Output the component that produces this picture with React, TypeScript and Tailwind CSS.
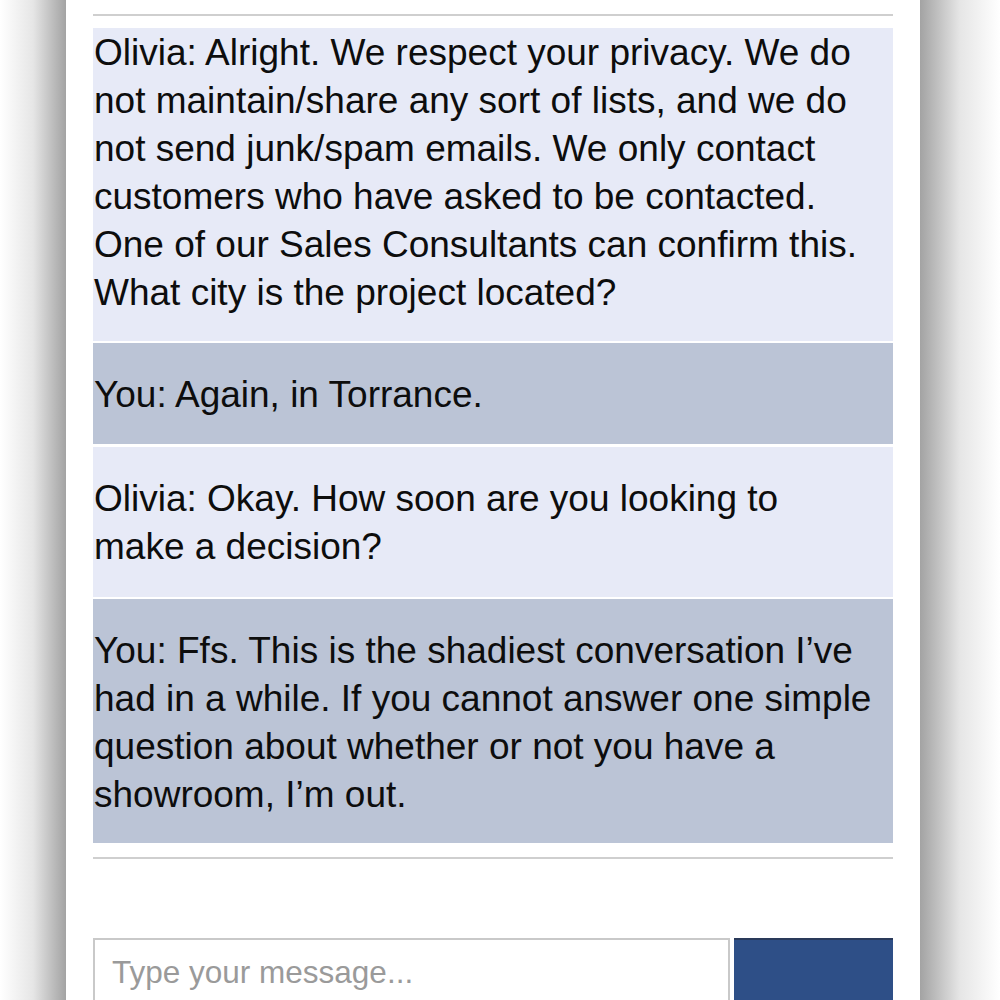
import React from "react";

const messages: { who: "olivia" | "you"; lines: string[]; cls: string }[] = [
  {
    who: "olivia",
    cls: "pt-[1px] pb-[24px]",
    lines: [
      "Olivia: Alright. We respect your privacy. We do",
      "not maintain/share any sort of lists, and we do",
      "not send junk/spam emails. We only contact",
      "customers who have asked to be contacted.",
      "One of our Sales Consultants can confirm this.",
      "What city is the project located?",
    ],
  },
  { who: "you", cls: "mt-[2px] pt-[28px] pb-[25px]", lines: ["You: Again, in Torrance."] },
  {
    who: "olivia",
    cls: "mt-[3px] pt-[28px] pb-[26px]",
    lines: ["Olivia: Okay. How soon are you looking to", "make a decision?"],
  },
  {
    who: "you",
    cls: "mt-[2px] pt-[28px] pb-[24px]",
    lines: [
      "You: Ffs. This is the shadiest conversation I\u2019ve",
      "had in a while. If you cannot answer one simple",
      "question about whether or not you have a",
      "showroom, I\u2019m out.",
    ],
  },
];

export default function App() {
  return (
    <div
      className="w-[1000px] h-[1000px] overflow-hidden flex bg-white"
      style={{ fontFamily: '"Liberation Sans", Arial, sans-serif' }}
    >
      <div className="w-[66px] h-full shrink-0 bg-gradient-to-r from-white via-[#e6e6e6] to-[#a3a3a3]" />
      <div className="w-[854px] h-full shrink-0 bg-white px-[27px] overflow-hidden">
        <div className="mt-[14px] h-[2px] bg-[#cfcfcf]" />
        <div className="mt-[12px]">
          {messages.map((m, i) => (
            <div
              key={i}
              className={
                (m.who === "olivia" ? "bg-[#e7eaf7] " : "bg-[#bbc4d6] ") +
                m.cls +
                " pl-[1px] text-[37px] leading-[48px] text-[#0d0d0d] whitespace-nowrap"
              }
            >
              {m.lines.map((l, j) => (
                <React.Fragment key={j}>
                  {l}
                  {j < m.lines.length - 1 && <br />}
                </React.Fragment>
              ))}
            </div>
          ))}
        </div>
        <div className="mt-[14px] h-[2px] bg-[#cfcfcf]" />
        <div className="mt-[79px] flex gap-[4px]">
          <div className="w-[637px] h-[80px] shrink-0 border-2 border-[#c9c9c9] pl-[17px] pt-[14px] text-[31.5px] leading-[36px] text-[#9a9a9a]">
            Type your message...
          </div>
          <div className="w-[159px] h-[80px] shrink-0 bg-[#2e4f87] border-t-2 border-[#2a3a5a]" />
        </div>
      </div>
      <div className="w-[80px] h-full shrink-0 bg-gradient-to-r from-[#a3a3a3] via-[#e6e6e6] to-white" />
    </div>
  );
}
